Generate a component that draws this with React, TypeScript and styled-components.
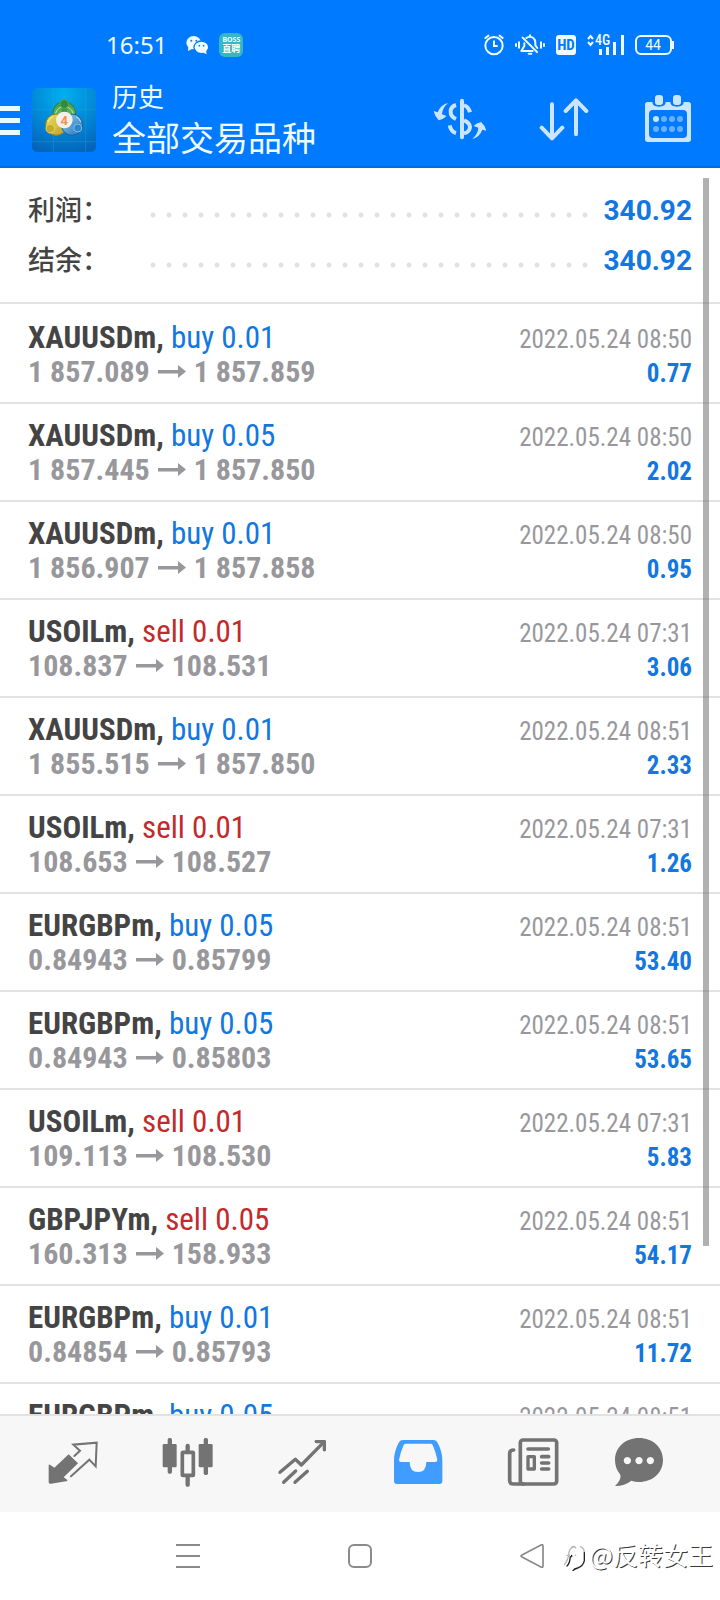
import React from "react";
import styled, { createGlobalStyle } from "styled-components";

const condensed = `"Roboto Condensed", "Liberation Sans Narrow", Roboto, sans-serif`;
const base = `Roboto, "Noto Sans CJK SC", sans-serif`;

const GlobalStyle = createGlobalStyle`
  * { box-sizing: border-box; }
  body { margin: 0; background: #fff; font-family: ${base}; }
  button { border: 0; padding: 0; background: none; font: inherit; cursor: pointer; }
  svg { display: block; flex: none; }
`;

const Screen = styled.div`
  display: flex;
  flex-direction: column;
  height: 100vh;
  background: #fff;
`;

const Header = styled.header`
  flex: none;
  background: #007aff;
  border-bottom: 2px solid #0a6bd6;
  color: #f0fbff;
`;

const StatusBar = styled.div`
  display: flex;
  align-items: center;
  justify-content: space-between;
  height: 72px;
  padding: 18px 46px 0 106px;
`;

const StatusGroup = styled.div<{ $gap: number }>`
  display: flex;
  align-items: center;
  gap: ${(p) => p.$gap}px;
`;

const Clock = styled.time`
  font: 400 24px/28px "Noto Sans", sans-serif;
  margin-right: 8px;
`;

const BossBadge = styled.div`
  width: 24px;
  height: 24px;
  border-radius: 6px;
  background: #35b8c3;
  color: #fff;
  text-align: center;
  font: 700 7px/8px "Noto Sans", sans-serif;
  padding-top: 3px;
`;

const BossName = styled.div`
  font: 700 9px/10px "Noto Sans CJK SC", sans-serif;
`;

const Toolbar = styled.div`
  display: flex;
  align-items: center;
  height: 94px;
  padding-top: 2px;
`;

const MenuButton = styled.button`
  width: 32px;
  color: #e8faff;
`;

const Titles = styled.div`
  flex: 1;
  min-width: 0;
  padding: 2px 0 0 16px;
  white-space: nowrap;
`;

const Section = styled.div`
  font-size: 26px;
  line-height: 36px;
`;

const Title = styled.h1`
  margin: 0;
  font-size: 34px;
  line-height: 46px;
  font-weight: 400;
`;

const ToolButton = styled.button`
  display: flex;
  justify-content: center;
  width: 104px;
  color: #cce5ff;
`;

const History = styled.main`
  position: relative;
  flex: 1;
  min-height: 0;
  overflow: hidden;
`;

const Summary = styled.dl`
  margin: 0;
  padding: 17px 28px;
  border-bottom: 2px solid #e2e2e2;
`;

const SummaryRow = styled.div`
  display: flex;
  align-items: center;
  height: 50px;
`;

const SummaryLabel = styled.dt`
  width: 117px;
  padding-top: 2px;
  color: #444;
  font-size: 27px;
  line-height: 36px;
  font-weight: 500;
`;

const Leader = styled.span`
  flex: 1;
  height: 16px;
  margin: 10px 11px 0 0;
  background: radial-gradient(circle, #e2e2e2 2px, transparent 3px) 0 0 / 16px 16px;
`;

const SummaryValue = styled.dd`
  margin: 0;
  color: #1277e0;
  font-size: 28px;
  font-weight: 700;
`;

const Deals = styled.ul`
  margin: 0;
  padding: 2px 0 0;
  list-style: none;
`;

const Deal = styled.li`
  display: flex;
  justify-content: space-between;
  height: 98px;
  padding: 15px 28px 0;
  border-bottom: 2px solid #e2e2e2;
  font-family: ${condensed};
  line-height: 34px;
  white-space: nowrap;
`;

const DealSide = styled.div<{ $end?: boolean }>`
  padding-top: ${(p) => (p.$end ? 2 : 0)}px;
  text-align: ${(p) => (p.$end ? "right" : "left")};
`;

const Symbol = styled.div`
  color: #444;
  font-size: 31px;
  font-weight: 700;
`;

const Action = styled.span<{ $sell: boolean }>`
  color: ${(p) => (p.$sell ? "#c22a2c" : "#1277e0")};
  font-weight: 400;
`;

const Prices = styled.div`
  display: flex;
  align-items: center;
  gap: 8px;
  color: #98989c;
  font-size: 30px;
  font-weight: 700;
`;

const DealTime = styled.div`
  color: #98989c;
  font-size: 25px;
`;

const Profit = styled.div`
  color: #1277e0;
  font-size: 25px;
  font-weight: 700;
`;

const ScrollThumb = styled.div`
  position: absolute;
  top: 10px;
  bottom: 168px;
  right: 11px;
  width: 6px;
  background: rgba(100, 100, 100, 0.5);
`;

const Tabs = styled.nav`
  flex: none;
  display: flex;
  height: 98px;
  padding: 0 15px;
  background: #f7f7f7;
  border-top: 2px solid #e2e2e2;
`;

const Tab = styled.button<{ $active?: boolean }>`
  width: calc(100% / 6);
  display: flex;
  align-items: center;
  justify-content: center;
  color: ${(p) => (p.$active ? "#409cff" : "#737373")};
  &:last-child { padding-right: 18px; }
`;

const SystemBar = styled.footer`
  position: relative;
  flex: none;
  display: flex;
  justify-content: center;
  height: 88px;
  background: #fff;
`;

const SystemButton = styled.button`
  display: flex;
  align-items: center;
  justify-content: center;
  width: 172px;
  color: #8a8a8a;
`;

const Watermark = styled.div`
  position: absolute;
  right: 7px;
  top: 24px;
  display: flex;
  align-items: center;
  color: #fff;
  font: 400 25px/36px "Noto Sans CJK SC", sans-serif;
  text-shadow: 1px 1px 0 #3a3a3a;
`;

const WeChat = () => (
  <svg width="24" height="20" viewBox="552 104 72 60" fill="currentColor">
    <path d="M562 140l-1 12 13-7z" />
    <ellipse cx="578" cy="127" rx="22" ry="20" />
    <ellipse cx="601" cy="141" rx="24" ry="21" fill="#007aff" />
    <ellipse cx="601" cy="141" rx="20" ry="17" />
    <path d="M604 156l13 6-2-12z" />
    <g fill="#007aff">
      <circle cx="571" cy="121" r="3" /><circle cx="586" cy="121" r="3" />
      <circle cx="595" cy="136" r="2.5" /><circle cx="608" cy="136" r="2.5" />
    </g>
  </svg>
);

const Alarm = () => (
  <svg width="20" height="22" viewBox="370 103 60 66" fill="none" stroke="currentColor" strokeWidth="6" strokeLinecap="round">
    <circle cx="400" cy="138" r="26" />
    <path d="M400 125v14h9M374 115l9-7M417 108l9 7" />
  </svg>
);

const Muted = () => (
  <svg width="30" height="22" viewBox="465 102 90 66" fill="none" stroke="currentColor" strokeWidth="6" strokeLinecap="round" strokeLinejoin="round">
    <path d="M468 132v6M477 127v16M543 127v16M552 132v6M488 113l43 43M499 114q11-8 21 0 6 5 6 14v8l6 8M493 130v8l-9 15h34M506 161h8M510 106v3" />
  </svg>
);

const HdBadge = () => (
  <svg width="20" height="20" viewBox="0 0 20 20">
    <rect width="20" height="20" rx="3" fill="#f0fbff" />
    <text x="10" y="15" textAnchor="middle" fontFamily={condensed} fontSize="15" fontWeight="700" fill="#007aff">HD</text>
  </svg>
);

const Signal = () => (
  <svg width="37" height="30" viewBox="0 -4 37 30" fill="currentColor">
    <path d="M1 5l2.500-3 2.500 3M1 8l2.500 3 2.500-3" fill="none" stroke="currentColor" strokeWidth="2" />
    <text x="8" y="11" fontFamily={condensed} fontSize="14" fontWeight="500">4G</text>
    <path d="M12 15h3v6h-3zM19 13h3v8h-3zM26 8h3v13h-3zM34 1h3v20h-3z" />
  </svg>
);

const Battery = () => (
  <svg width="39" height="20" viewBox="0 0 39 20" fill="none" stroke="currentColor" strokeWidth="2">
    <rect x="1" y="1" width="35" height="18" rx="5" />
    <path d="M38 6v8" />
    <text x="18" y="15" textAnchor="middle" fontFamily="Roboto, sans-serif" fontSize="14" fill="currentColor" stroke="none">44</text>
  </svg>
);

const Hamburger = () => (
  <svg width="20" height="30" viewBox="0 0 20 30" fill="currentColor">
    <path d="M0 1h20v5H0zM0 13h20v5H0zM0 25h20v5H0z" />
  </svg>
);

const AppLogo = () => (
  <svg width="64" height="64" viewBox="96 264 192 192">
    <defs>
      <radialGradient id="sky" cx=".5" cy=".1" r=".95">
        <stop offset="0" stopColor="#00b0f0" /><stop offset=".5" stopColor="#028bd8" /><stop offset="1" stopColor="#0464ba" />
      </radialGradient>
      <linearGradient id="green" x2="0" y2="1"><stop offset="0" stopColor="#3d9a48" /><stop offset="1" stopColor="#86cb6c" /></linearGradient>
      <linearGradient id="gold" x2="1" y2="1"><stop offset="0" stopColor="#efe05c" /><stop offset="1" stopColor="#b59c2c" /></linearGradient>
      <linearGradient id="blue" x2="1" y2="1"><stop offset="0" stopColor="#8fd0f2" /><stop offset="1" stopColor="#2272b8" /></linearGradient>
    </defs>
    <rect x="96" y="264" width="192" height="192" rx="16" fill="url(#sky)" />
    <path d="M160 264v192M257 264v192M96 329h192M96 425h192" stroke="#35a5e0" strokeWidth="2" opacity=".5" />
    <g strokeWidth="3">
      <circle cx="193" cy="339" r="34" fill="url(#green)" stroke="#2c7a3c" />
      <circle cx="169" cy="374" r="32" fill="url(#gold)" stroke="#8d7e22" />
      <circle cx="216" cy="374" r="32" fill="url(#blue)" stroke="#1a5f9f" />
      <path d="M167 340a27 27 0 0 1 52 0" fill="none" stroke="#c5e8b0" />
      <path d="M144 366a27 27 0 0 1 14-16" fill="none" stroke="#f8f2a8" />
      <path d="M228 350a27 27 0 0 1 14 16" fill="none" stroke="#c4e8fb" />
      <path d="M193 320v22" stroke="#3c9945" strokeWidth="15" />
      <path d="M155 383l20-13" stroke="#d8c440" strokeWidth="16" />
      <path d="M231 383l-20-13" stroke="#4a9bd8" strokeWidth="16" />
      <circle cx="193" cy="312" r="13" fill="#328a40" stroke="#5cab58" />
      <circle cx="151" cy="386" r="13" fill="#c4aa2e" stroke="#e5d65d" />
      <circle cx="233" cy="384" r="12" fill="#2e84c6" stroke="#79c1eb" />
    </g>
    <circle cx="193" cy="360" r="25" fill="#f4efea" />
    <text x="193" y="374" textAnchor="middle" fontFamily="Roboto, sans-serif" fontSize="39" fontWeight="700" fill="#f0924a">4</text>
  </svg>
);

const Currency = () => (
  <svg width="54" height="44" viewBox="219 294 162 132" fill="none" stroke="currentColor">
    <path d="M306 302v110" strokeWidth="12" strokeLinecap="round" />
    <path d="M288 315q-16 5-16 20 0 15 16 22M288 399q-15-4-19-23" strokeWidth="12" />
    <path d="M312 316q13 3 18 21M312 361q17 7 18 20-1 16-18 19" strokeWidth="12" />
    <g fill="currentColor" stroke="none">
      <path d="M264 309q-18 16-18 34l14 5q-10 10-24 13-12-12-15-28l12 4q8-22 31-28z" />
      <path d="M337 417q17-16 18-34l-14-5q8-9 22-12 12 10 16 26l-12-3q-8 22-30 28z" />
    </g>
  </svg>
);

const Sort = () => (
  <svg width="50" height="44" viewBox="537 294 150 132" fill="none" stroke="currentColor" strokeWidth="12" strokeLinecap="round" strokeLinejoin="round">
    <path d="M576 313v101M545 383l31 32 31-32M648 403V302M617 333l31-32 31 32" />
  </svg>
);

const Calendar = () => (
  <svg width="48" height="52" viewBox="852 282 144 156" fill="currentColor">
    <path fillRule="evenodd" d="M863 306h14q0 14 20 14t20-14h14q0 14 20 14t20-14h14q8 0 8 8v104q0 8-8 8H863q-8 0-8-8V314q0-8 8-8zM879 330q-12 0-12 12v60q0 12 12 12h90q12 0 12-12v-60q0-12-12-12z" />
    <rect x="885" y="285" width="24" height="30" rx="9" />
    <rect x="939" y="285" width="24" height="30" rx="9" />
    <circle cx="888" cy="357" r="9" />
    <g fill="#66b0ff">
      {[912, 936, 960].map((x) => <circle key={x} cx={x} cy="357" r="9" />)}
      {[888, 912, 936, 960].map((x) => <circle key={x} cx={x} cy="387" r="9" />)}
    </g>
  </svg>
);

const PriceArrow = () => (
  <svg width="28" height="14" viewBox="0 0 28 14" fill="currentColor">
    <path d="M0 5h20V0l8 6.500-8 6.500V8.500H0z" />
  </svg>
);

const Quotes = () => (
  <svg width="54" height="54" viewBox="140 201 162 162" fill="currentColor">
    <path d="M148 286q1-5 5-1l12 8 43-40 28 27-43 42 10 7q3 5-3 5l-45 7q-7 2-7-5z" />
    <path d="M215 319l55-50 19 20 3-71-70 6 20 18-17 16" fill="none" stroke="currentColor" strokeWidth="6" strokeLinecap="round" />
  </svg>
);

const Candles = () => (
  <svg width="54" height="54" viewBox="485 201 162 162" fill="currentColor">
    <rect x="490" y="222" width="42" height="70" rx="4" />
    <rect x="505" y="204" width="13" height="107" rx="5" />
    <rect x="598" y="222" width="42" height="70" rx="4" />
    <rect x="613" y="204" width="13" height="111" rx="5" />
    <rect x="549" y="247" width="33" height="69" rx="2" fill="none" stroke="currentColor" strokeWidth="11" />
    <path d="M565 228v16M565 320v24" stroke="currentColor" strokeWidth="13" strokeLinecap="round" />
  </svg>
);

const Trend = () => (
  <svg width="54" height="54" viewBox="830 201 162 162" fill="none" stroke="currentColor" strokeWidth="10" strokeLinecap="round" strokeLinejoin="round">
    <path d="M842 307l46-39 18 17 66-67M853 337l36-34M887 337l37-33" />
    <path d="M948 210h28q4 0 4 4v28q-8 6-10-3v-16l-3-3h-17q-8-4-2-10z" fill="currentColor" stroke="none" />
  </svg>
);

const Inbox = () => (
  <svg width="54" height="54" viewBox="94 201 162 162" fill="currentColor">
    <path fillRule="evenodd" d="M130 210h91q8 0 12 7 15 27 15 54v62q0 9-9 9H112q-9 0-9-9v-62q0-27 15-54 4-7 12-7zM138 221q-4 0-6 4-9 20-14 44 0 7 6 7h26q0 30 25 30t25-30h27q6 0 6-7-5-24-14-44-2-4-6-4z" />
  </svg>
);

const News = () => (
  <svg width="54" height="54" viewBox="439 201 162 162" fill="none" stroke="currentColor" strokeWidth="11" strokeLinecap="round">
    <rect x="482" y="210" width="109" height="132" rx="8" />
    <path d="M462 240q-12 0-12 10v82q0 10 12 10h30M505 237h61M546 260h21M546 279h21M546 297h21" />
    <rect x="505" y="260" width="19" height="37" strokeWidth="10" strokeLinejoin="round" />
  </svg>
);

const Chat = () => (
  <svg width="54" height="54" viewBox="756 201 162 162" fill="currentColor">
    <path fillRule="evenodd" d="M837 204c41 0 72 28 72 66s-31 66-72 66q-13 0-23-4-22 17-49 16 20-19 16-34-16-18-16-44c0-38 31-66 72-66zM802 261a11 11 0 1 0 .1 0zM837 261a11 11 0 1 0 .1 0zM871 261a11 11 0 1 0 .1 0z" />
  </svg>
);

const TABS = [
  { label: "行情", Icon: Quotes },
  { label: "图表", Icon: Candles },
  { label: "交易", Icon: Trend },
  { label: "历史", Icon: Inbox },
  { label: "新闻", Icon: News },
  { label: "消息", Icon: Chat },
];

type DealData = [symbol: string, side: "buy" | "sell", volume: string, open: string, close: string, time: string, profit: string];

const DEALS: DealData[] = [
  ["XAUUSDm", "buy", "0.01", "1 857.089", "1 857.859", "08:50", "0.77"],
  ["XAUUSDm", "buy", "0.05", "1 857.445", "1 857.850", "08:50", "2.02"],
  ["XAUUSDm", "buy", "0.01", "1 856.907", "1 857.858", "08:50", "0.95"],
  ["USOILm", "sell", "0.01", "108.837", "108.531", "07:31", "3.06"],
  ["XAUUSDm", "buy", "0.01", "1 855.515", "1 857.850", "08:51", "2.33"],
  ["USOILm", "sell", "0.01", "108.653", "108.527", "07:31", "1.26"],
  ["EURGBPm", "buy", "0.05", "0.84943", "0.85799", "08:51", "53.40"],
  ["EURGBPm", "buy", "0.05", "0.84943", "0.85803", "08:51", "53.65"],
  ["USOILm", "sell", "0.01", "109.113", "108.530", "07:31", "5.83"],
  ["GBPJPYm", "sell", "0.05", "160.313", "158.933", "08:51", "54.17"],
  ["EURGBPm", "buy", "0.01", "0.84854", "0.85793", "08:51", "11.72"],
  ["EURGBPm", "buy", "0.05", "", "", "08:51", ""],
];

const SUMMARY = [
  ["利润：", "340.92"],
  ["结余：", "340.92"],
];

export default function App() {
  return (
    <Screen>
      <GlobalStyle />
      <Header>
        <StatusBar>
          <StatusGroup $gap={10}>
            <Clock>16:51</Clock>
            <WeChat />
            <BossBadge>BOSS<BossName>直聘</BossName></BossBadge>
          </StatusGroup>
          <StatusGroup $gap={11}>
            <Alarm />
            <Muted />
            <HdBadge />
            <Signal />
            <Battery />
          </StatusGroup>
        </StatusBar>
        <Toolbar>
          <MenuButton aria-label="菜单"><Hamburger /></MenuButton>
          <AppLogo />
          <Titles>
            <Section>历史</Section>
            <Title>全部交易品种</Title>
          </Titles>
          <ToolButton aria-label="货币"><Currency /></ToolButton>
          <ToolButton aria-label="排序"><Sort /></ToolButton>
          <ToolButton aria-label="日期"><Calendar /></ToolButton>
        </Toolbar>
      </Header>

      <History>
        <Summary>
          {SUMMARY.map(([label, value]) => (
            <SummaryRow key={label}>
              <SummaryLabel>{label}</SummaryLabel>
              <Leader />
              <SummaryValue>{value}</SummaryValue>
            </SummaryRow>
          ))}
        </Summary>
        <Deals>
          {DEALS.map(([symbol, side, volume, open, close, time, profit], i) => (
            <Deal key={i}>
              <DealSide>
                <Symbol>
                  {symbol}, <Action $sell={side === "sell"}>{side} {volume}</Action>
                </Symbol>
                {open && (
                  <Prices>
                    <span>{open}</span>
                    <PriceArrow />
                    <span>{close}</span>
                  </Prices>
                )}
              </DealSide>
              <DealSide $end>
                <DealTime>2022.05.24 {time}</DealTime>
                <Profit>{profit}</Profit>
              </DealSide>
            </Deal>
          ))}
        </Deals>
        <ScrollThumb />
      </History>

      <Tabs>
        {TABS.map(({ label, Icon }) => (
          <Tab key={label} aria-label={label} $active={label === "历史"}>
            <Icon />
          </Tab>
        ))}
      </Tabs>

      <SystemBar>
        <SystemButton aria-label="最近任务">
          <svg width="24" height="26" viewBox="0 0 24 26" stroke="currentColor" strokeWidth="2">
            <path d="M0 2h24M0 13h24M0 24h24" />
          </svg>
        </SystemButton>
        <SystemButton aria-label="主屏幕">
          <svg width="24" height="24" viewBox="0 0 24 24" fill="none" stroke="currentColor" strokeWidth="2">
            <rect x="1" y="1" width="22" height="22" rx="5" />
          </svg>
        </SystemButton>
        <SystemButton aria-label="返回">
          <svg width="24" height="24" viewBox="0 0 24 24" fill="none" stroke="currentColor" strokeWidth="1.7" strokeLinejoin="round">
            <path d="M2 11L21 1q2-1 2 1v20q0 2-2 1L2 13q-2-1 0-2z" />
          </svg>
        </SystemButton>
        <Watermark>
          <svg width="25" height="34" viewBox="39 21 75 102" fill="none" strokeWidth="4" strokeLinecap="round">
            <path d="M40 104q12-14 14-36 2-14 12-16M48 76h8M62 52q8-6 12 2M73 76h1M88 50q12 4 12 18" stroke="#b5b5b5" />
            <path d="M48 108q8-6 10-28M62 80v-4M100 68v24q-3 16-20 22-10 2-14 8" stroke="#222" />
          </svg>
          <span>@反转女王</span>
        </Watermark>
      </SystemBar>
    </Screen>
  );
}
